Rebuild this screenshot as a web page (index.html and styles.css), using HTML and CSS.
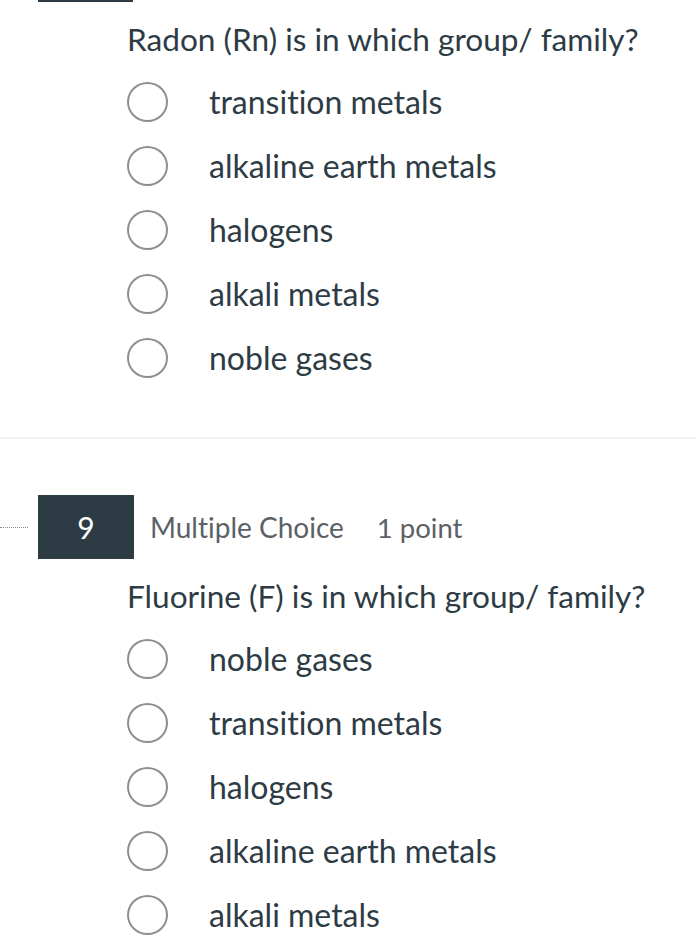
FILE: index.html
```html
<!DOCTYPE html>
<html>
<head>
<meta charset="utf-8">
<link rel="stylesheet" href="styles.css">
</head>
<body>
<div class="stub"></div>
<section class="question first">
  <p class="qtext">Radon (Rn) is in which group/ family?</p>
  <ul class="options">
    <li><span class="radio"></span><span class="label">transition metals</span></li>
    <li><span class="radio"></span><span class="label">alkaline earth metals</span></li>
    <li><span class="radio"></span><span class="label">halogens</span></li>
    <li><span class="radio"></span><span class="label">alkali metals</span></li>
    <li><span class="radio"></span><span class="label">noble gases</span></li>
  </ul>
</section>
<hr class="divider">
<section class="question second">
  <div class="qheader">
    <span class="dots"></span>
    <span class="num">9</span>
    <span class="type">Multiple Choice</span>
    <span class="points">1 point</span>
  </div>
  <p class="qtext">Fluorine (F) is in which group/ family?</p>
  <ul class="options">
    <li><span class="radio"></span><span class="label">noble gases</span></li>
    <li><span class="radio"></span><span class="label">transition metals</span></li>
    <li><span class="radio"></span><span class="label">halogens</span></li>
    <li><span class="radio"></span><span class="label">alkaline earth metals</span></li>
    <li><span class="radio"></span><span class="label">alkali metals</span></li>
  </ul>
</section>
</body>
</html>
```
FILE: styles.css
```css
html, body {
  margin: 0;
  padding: 0;
  background: #ffffff;
}
body {
  font-family: Lato, "Liberation Sans", sans-serif;
  font-variant-ligatures: none;
  color: #2d3b45;
  width: 696px;
  overflow: hidden;
}
.stub {
  margin-left: 38px;
  width: 95px;
  height: 2px;
  background: #2d3b45;
}
.qtext {
  margin: 0;
  padding-left: 127px;
  font-size: 31.6px;
  line-height: 36px;
  height: 36px;
  white-space: nowrap;
}
.first .qtext {
  margin-top: 19px;
}
.options {
  list-style: none;
  margin: 13px 0 0 0;
  padding: 0 0 0 127px;
}
.options li {
  display: flex;
  align-items: center;
  height: 64px;
}
.radio {
  box-sizing: border-box;
  width: 41px;
  height: 40px;
  border: 2px solid #8e8e8e;
  border-radius: 50%;
  flex: none;
}
.label {
  margin-left: 41px;
  font-size: 32px;
  line-height: 36px;
}
.divider {
  margin: 47px 0 0 0;
  border: 0;
  height: 2px;
  background: #f2f2f2;
}
.qheader {
  margin-top: 56px;
  display: flex;
  align-items: center;
  height: 64px;
}
.dots {
  width: 28px;
  border-top: 1px dotted #8a8a8a;
  margin-right: 10px;
}
.num {
  width: 96px;
  height: 64px;
  background: #2d3b45;
  color: #fff;
  font-size: 30px;
  display: flex;
  align-items: center;
  justify-content: center;
}
.type {
  margin-left: 16px;
  font-size: 28px;
  color: #5b6166;
}
.points {
  margin-left: 33px;
  font-size: 27.5px;
  color: #5b6166;
}
.second .qtext {
  margin-top: 19px;
}
```
